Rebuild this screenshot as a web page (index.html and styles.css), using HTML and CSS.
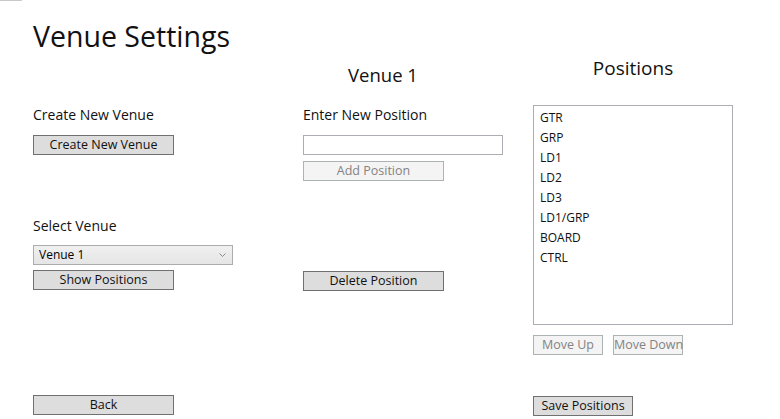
FILE: index.html
```html
<!DOCTYPE html>
<html lang="en">
<head>
<meta charset="utf-8">
<title>Venue Settings</title>
<link rel="stylesheet" href="styles.css">
</head>
<body>
<div class="corner-mark"></div>
<div class="window">
  <div class="col col-venue">
    <h1 class="title">Venue Settings</h1>
    <div class="label label-create">Create New Venue</div>
    <button class="btn btn-wide btn-create">Create New Venue</button>
    <div class="label label-select">Select Venue</div>
    <div class="combo">
      <span class="combo-text">Venue 1</span>
      <svg class="combo-arrow" width="7" height="4" viewBox="0 0 7 4"><path d="M0.5 0.5 L3.5 3.5 L6.5 0.5" fill="none" stroke="#8a8a8a" stroke-width="1"/></svg>
    </div>
    <button class="btn btn-wide btn-show">Show Positions</button>
    <button class="btn btn-wide btn-back">Back</button>
  </div>
  <div class="col col-position">
    <div class="venue-name">Venue 1</div>
    <div class="label label-enter">Enter New Position</div>
    <input class="textbox" type="text">
    <button class="btn btn-wide btn-disabled btn-add" disabled>Add Position</button>
    <button class="btn btn-wide btn-delete">Delete Position</button>
  </div>
  <div class="col col-list">
    <div class="list-title">Positions</div>
    <ul class="listbox">
      <li>GTR</li>
      <li>GRP</li>
      <li>LD1</li>
      <li>LD2</li>
      <li>LD3</li>
      <li>LD1/GRP</li>
      <li>BOARD</li>
      <li>CTRL</li>
    </ul>
    <div class="move-row">
      <button class="btn btn-move btn-disabled" disabled>Move Up</button>
      <button class="btn btn-move btn-disabled" disabled>Move Down</button>
    </div>
    <button class="btn btn-save">Save Positions</button>
  </div>
</div>
</body>
</html>
```
FILE: styles.css
```css
* { box-sizing: border-box; }
html, body {
  margin: 0;
  padding: 0;
  background: #ffffff;
  width: 780px;
  height: 419px;
  overflow: hidden;
  font-family: "Open Sans", "Noto Sans", sans-serif;
  color: #000;
}
.corner-mark {
  position: absolute;
  left: 0;
  top: 0;
  width: 22px;
  height: 1px;
  background: #c8c8c8;
}
.window {
  display: grid;
  grid-template-columns: 270px 230px 200px;
  padding-left: 33px;
}
.col {
  display: flex;
  flex-direction: column;
  align-items: flex-start;
}
.title {
  margin: 22px 0 0 0;
  font-size: 28.5px;
  line-height: 28px;
  height: 28px;
  font-weight: 400;
  color: #111;
  white-space: nowrap;
}
.label {
  font-size: 14px;
  line-height: 15px;
  height: 15px;
  white-space: nowrap;
  color: #111;
}
.label-create { margin-top: 57px; }
.label-enter { margin-top: 23px; }
.label-select { margin-top: 63px; }

.btn {
  font-family: inherit;
  font-size: 12.5px;
  line-height: 18px;
  height: 20px;
  padding: 0;
  margin: 0;
  background: #dddddd;
  border: 1px solid #707070;
  border-radius: 0;
  color: #111;
  text-align: center;
  white-space: nowrap;
}
.btn-wide { width: 141px; }
.btn-disabled {
  background: #f4f4f4;
  border-color: #adb2b5;
  color: #838383;
}
.btn-create { margin-top: 13px; }
.btn-show { margin-top: 5px; }
.btn-back { margin-top: 105px; }
.btn-add { margin-top: 6px; }
.btn-delete { margin-top: 90px; }

.combo {
  margin-top: 12px;
  width: 200px;
  height: 20px;
  border: 1px solid #acacac;
  background: linear-gradient(#f0f0f0, #e5e5e5);
  display: flex;
  align-items: center;
  justify-content: space-between;
  padding: 0 6px 0 5px;
}
.combo-text {
  font-size: 12px;
  line-height: 18px;
}
.combo-arrow { display: block; }

.venue-name {
  margin-top: 65px;
  width: 160px;
  text-align: center;
  font-size: 18.5px;
  line-height: 19px;
  height: 19px;
  color: #111;
}
.textbox {
  margin-top: 13px;
  width: 200px;
  height: 20px;
  border: 1px solid #abadb3;
  background: #fff;
  padding: 0 3px;
  font-family: inherit;
  font-size: 12px;
  outline: none;
}

.list-title {
  margin-top: 58px;
  width: 200px;
  text-align: center;
  font-size: 19px;
  line-height: 20px;
  height: 20px;
  color: #111;
}
.listbox {
  list-style: none;
  margin: 27px 0 0 0;
  padding: 2px 0 0 6px;
  width: 200px;
  height: 220px;
  border: 1px solid #abadb3;
}
.listbox li {
  font-size: 12px;
  line-height: 20px;
  height: 20px;
  color: #111;
}
.move-row {
  display: flex;
  gap: 10px;
  margin-top: 10px;
}
.btn-move { width: 70px; font-size: 12.5px; }
.btn-save { margin-top: 41px; width: 100px; }
```
